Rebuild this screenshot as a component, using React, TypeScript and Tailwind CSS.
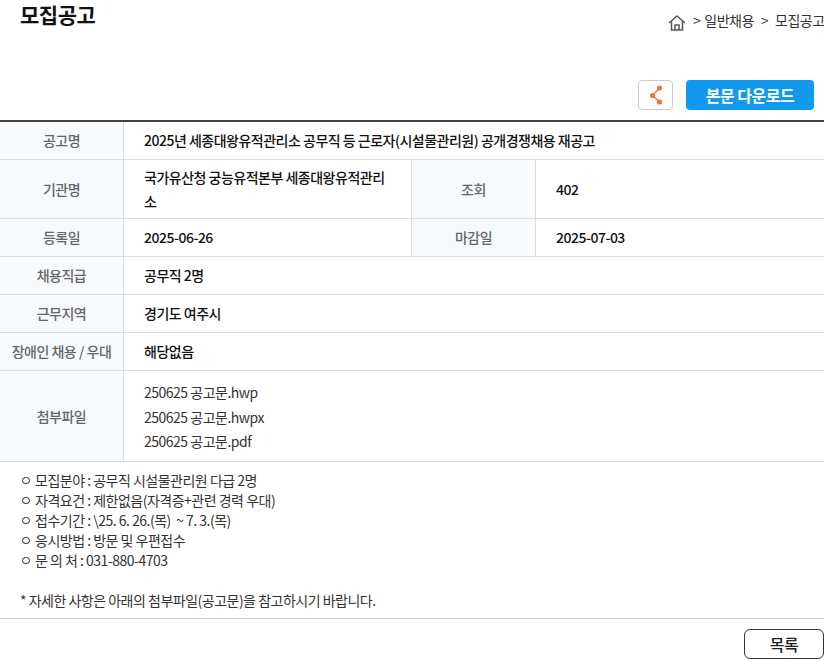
const labelCls =
  "flex items-center justify-center bg-[#f7fafd] border-r border-b border-[#dddddd] text-[14px] text-[#666666] font-medium";
const valueCls =
  "flex items-center px-5 border-b border-[#dddddd] text-[14px] font-medium text-[#111111]";

const notes = [
  "모집분야 : 공무직 시설물관리원 다급 2명",
  "자격요건 : 제한없음(자격증+관련 경력 우대)",
  "접수기간 : \\25. 6. 26.(목)  ~ 7. 3.(목)",
  "응시방법 : 방문 및 우편접수",
  "문 의 처 : 031-880-4703",
];

function Row({ label, value }: { label: string; value: string }) {
  return (
    <>
      <div className={`${labelCls} h-[38px]`}>{label}</div>
      <div className={`${valueCls} col-span-3 h-[38px]`}>{value}</div>
    </>
  );
}

export default function App() {
  return (
    <div className="w-[824px] h-[660px] overflow-hidden bg-white tracking-[-0.5px] text-[#222222] font-['Noto_Sans_CJK_KR','Noto_Sans',sans-serif]">
      <div className="flex justify-between h-[80px]">
        <h1 className="pl-5 text-[21px] leading-[28px] font-bold text-[#111111]">모집공고</h1>
        <div className="flex items-start pt-[10px] whitespace-nowrap text-[14px] leading-[20px] text-[#333333] w-[156px] overflow-hidden">
          <svg className="mt-[5px] mr-[7px] shrink-0" width="18" height="16" viewBox="0 0 18 16" fill="none" stroke="#555555" strokeWidth="1.5">
            <path d="M1 8 L9 1 L17 8" />
            <path d="M3.5 6.5 V15 H14.5 V6.5" />
            <path d="M7 15 V10 H11 V15" />
          </svg>
          <span>&gt;</span>
          <span className="ml-[4px]">일반채용</span>
          <span className="ml-[7px]">&gt;</span>
          <span className="ml-[7px]">모집공고</span>
        </div>
      </div>

      <div className="flex justify-end items-start gap-[13px] pr-[10px] h-[40px]">
        <button className="flex items-center justify-center w-[35px] h-[30px] rounded-[4px] border border-[#cccccc] bg-white">
          <svg width="16" height="22" viewBox="0 0 16 22">
            <path d="M11.5 4 L4.5 11.5 L11.5 18" fill="none" stroke="#ee7440" strokeWidth="1.2" />
            <circle cx="11.5" cy="4" r="2.6" fill="#ee7440" />
            <circle cx="4.5" cy="11.5" r="2.6" fill="#ee7440" />
            <circle cx="11.5" cy="18" r="2.6" fill="#ee7440" />
          </svg>
        </button>
        <button className="w-[128px] h-[30px] rounded-[4px] bg-[#1199ee] text-white text-[16px] font-bold leading-[30px]">
          본문 다운로드
        </button>
      </div>

      <div className="grid grid-cols-[124px_288px_124px_288px] border-t-2 border-[#444444]">
        <Row label="공고명" value="2025년 세종대왕유적관리소 공무직 등 근로자(시설물관리원) 공개경쟁채용 재공고" />

        <div className={`${labelCls} h-[59px]`}>기관명</div>
        <div className={`${valueCls} h-[59px] border-r leading-[24px]`}>국가유산청 궁능유적본부 세종대왕유적관리소</div>
        <div className={`${labelCls} h-[59px]`}>조회</div>
        <div className={`${valueCls} h-[59px]`}>402</div>

        <div className={`${labelCls} h-[38px]`}>등록일</div>
        <div className={`${valueCls} h-[38px] border-r`}>2025-06-26</div>
        <div className={`${labelCls} h-[38px]`}>마감일</div>
        <div className={`${valueCls} h-[38px]`}>2025-07-03</div>

        <Row label="채용직급" value="공무직 2명" />
        <Row label="근무지역" value="경기도 여주시" />
        <Row label="장애인 채용 / 우대" value="해당없음" />

        <div className={`${labelCls} h-[91px]`}>첨부파일</div>
        <div className="col-span-3 h-[91px] flex flex-col justify-center pt-[2px] px-5 border-b border-[#dddddd] text-[14px] leading-[24.5px] text-[#333333]">
          <span>250625 공고문.hwp</span>
          <span>250625 공고문.hwpx</span>
          <span>250625 공고문.pdf</span>
        </div>
      </div>

      <div className="h-[157px] px-[20px] pt-[8px] border-b border-[#cccccc] text-[14px] leading-[20px] text-[#333333] whitespace-pre">
        <ul>
          {notes.map((note) => (
            <li key={note} className="flex items-center">
              <span className="w-[8px] h-[7px] ml-[2px] mr-[5px] rounded-full border-[1.5px] border-[#222222] shrink-0" />
              {note}
            </li>
          ))}
        </ul>
        <p className="mt-[20px]">* 자세한 사항은 아래의 첨부파일(공고문)을 참고하시기 바랍니다.</p>
      </div>

      <div className="flex justify-end pt-[10px]">
        <button className="w-[80px] h-[30px] rounded-[6px] border border-[#333333] bg-white text-[16px] font-medium text-[#222222]">
          목록
        </button>
      </div>
    </div>
  );
}
